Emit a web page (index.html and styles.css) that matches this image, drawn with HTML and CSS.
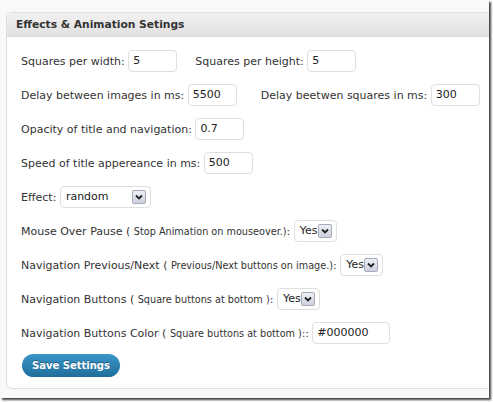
FILE: index.html
```html
<!DOCTYPE html>
<html>
<head>
<meta charset="utf-8">
<link rel="stylesheet" href="styles.css">
</head>
<body>
<div class="frame">
  <div class="postbox">
    <h3 class="hndle">Effects &amp; Animation Setings</h3>
    <div class="inside">
      <div class="row">
        <span class="grp gap18">Squares per width: <span class="input w49">5</span></span>
        <span class="grp">Squares per height: <span class="input w49">5</span></span>
      </div>
      <div class="row">
        <span class="grp gap24">Delay between images in ms: <span class="input w49">5500</span></span>
        <span class="grp">Delay beetwen squares in ms: <span class="input w49">300</span></span>
      </div>
      <div class="row">
        <span class="grp">Opacity of title and navigation: <span class="input w49">0.7</span></span>
      </div>
      <div class="row">
        <span class="grp">Speed of title appereance in ms: <span class="input w49">500</span></span>
      </div>
      <div class="row">
        <span class="grp">Effect: <span class="select w91"><span class="val">random</span><span class="arrow"><svg width="8" height="6" viewBox="0 0 8 6"><path d="M1 1.5 L4 4.5 L7 1.5" fill="none" stroke="#222" stroke-width="1.8"/></svg></span></span></span>
      </div>
      <div class="row">
        <span class="grp">Mouse Over Pause ( <small>Stop Animation on mouseover.)</small>: <span class="select"><span class="val">Yes</span><span class="arrow"><svg width="8" height="6" viewBox="0 0 8 6"><path d="M1 1.5 L4 4.5 L7 1.5" fill="none" stroke="#222" stroke-width="1.8"/></svg></span></span></span>
      </div>
      <div class="row">
        <span class="grp">Navigation Previous/Next ( <small>Previous/Next buttons on image.)</small>: <span class="select"><span class="val">Yes</span><span class="arrow"><svg width="8" height="6" viewBox="0 0 8 6"><path d="M1 1.5 L4 4.5 L7 1.5" fill="none" stroke="#222" stroke-width="1.8"/></svg></span></span></span>
      </div>
      <div class="row">
        <span class="grp">Navigation Buttons ( <small>Square buttons at bottom )</small>: <span class="select"><span class="val">Yes</span><span class="arrow"><svg width="8" height="6" viewBox="0 0 8 6"><path d="M1 1.5 L4 4.5 L7 1.5" fill="none" stroke="#222" stroke-width="1.8"/></svg></span></span></span>
      </div>
      <div class="row">
        <span class="grp">Navigation Buttons Color ( <small>Square buttons at bottom ):</small>: <span class="input w78">#000000</span></span>
      </div>
      <div class="row btnrow">
        <span class="button">Save Settings</span>
      </div>
    </div>
  </div>
</div>
</body>
</html>
```
FILE: styles.css
```css
html, body {
  margin: 0;
  padding: 0;
  background: #ffffff;
}
body {
  width: 493px;
  height: 402px;
  overflow: hidden;
  font-family: "DejaVu Sans", Verdana, sans-serif;
  font-size: 11px;
  color: #333333;
}
.frame {
  width: 489px;
  height: 398px;
  background: #f9f9f9;
  box-sizing: border-box;
  padding: 12px 0 0 6px;
  overflow: hidden;
  box-shadow: 2px 2px 2px rgba(0, 0, 0, 0.75);
}
.postbox {
  width: 500px;
  height: 377px;
  box-sizing: border-box;
  border: 1px solid #dfdfdf;
  border-radius: 6px;
  background: #ffffff;
  overflow: hidden;
}
.hndle {
  margin: 0;
  height: 24px;
  box-sizing: border-box;
  padding: 0 0 0 9px;
  line-height: 24px;
  font-size: 10.7px;
  font-weight: bold;
  color: #333333;
  background: linear-gradient(#f1f1f1, #e1e1e1);
  border-bottom: 1px solid #dcdcdc;
}
.inside {
  padding: 13px 0 0 14px;
  display: flex;
  flex-direction: column;
  gap: 12px;
}
.row {
  display: flex;
  align-items: center;
  height: 22px;
  white-space: nowrap;
}
.grp {
  display: inline-flex;
  align-items: center;
  white-space: pre;
}
.gap18 { margin-right: 18px; }
.gap24 { margin-right: 24px; }
small {
  font-size: 9.7px;
}
.input {
  display: inline-block;
  height: 22px;
  box-sizing: border-box;
  border: 1px solid #dfdfdf;
  border-radius: 4px;
  background: #fff;
  padding: 0 0 0 4px;
  line-height: 20px;
  color: #222;
}
.w49 { width: 49px; }
.w78 { width: 78px; }
.select {
  display: inline-flex;
  align-items: center;
  height: 22px;
  box-sizing: border-box;
  border: 1px solid #dfdfdf;
  border-radius: 4px;
  background: #fff;
  padding: 0 4px 0 5px;
  color: #222;
}
.w91 { width: 91px; justify-content: space-between; }
.val { line-height: 20px; }
.arrow {
  display: inline-flex;
  align-items: center;
  justify-content: center;
  width: 14px;
  height: 14px;
  box-sizing: border-box;
  border: 1px solid #a5a9b8;
  border-radius: 2px;
  background: linear-gradient(#eef0f7, #cdd0dd);
}
.btnrow {
  margin-top: -2px;
  height: 23px;
}
.button {
  display: inline-block;
  margin-left: 1px;
  width: 98px;
  height: 23px;
  line-height: 23px;
  text-align: center;
  border-radius: 12px;
  background: linear-gradient(#3a96c8, #1f6e9c);
  color: #ffffff;
  font-weight: bold;
  font-size: 10px;
  text-shadow: 0 -1px 0 rgba(0, 0, 0, 0.3);
}
```
